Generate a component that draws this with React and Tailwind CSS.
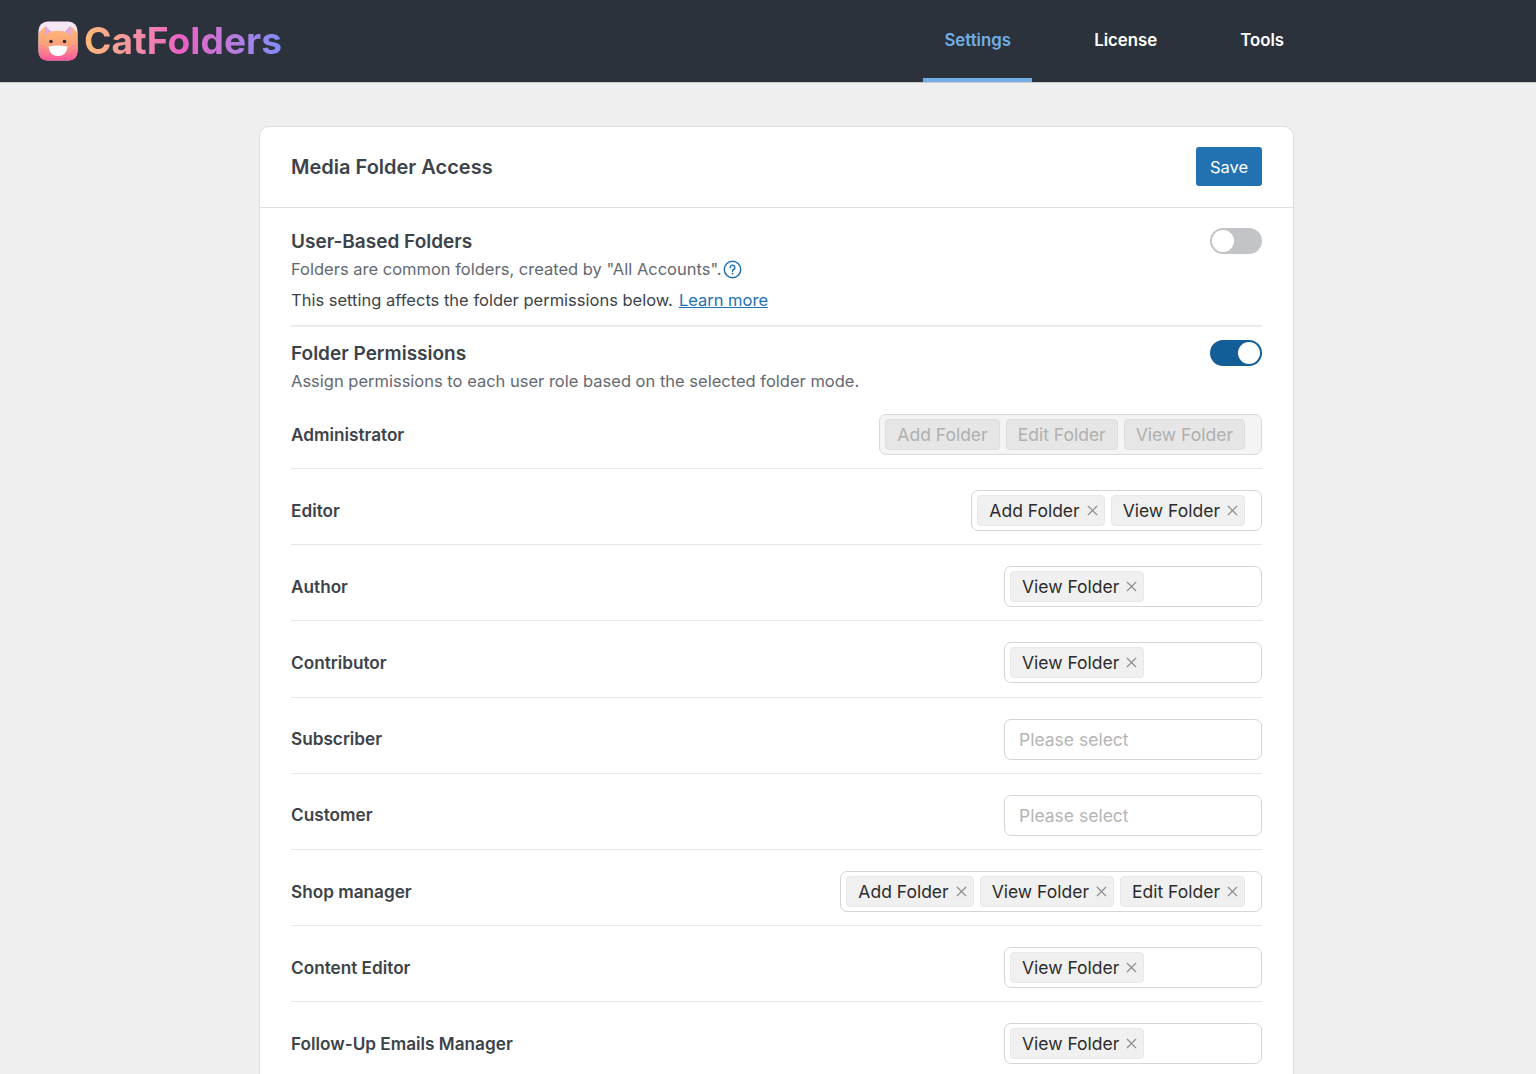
import { X } from "lucide-react";

const roles = [
  { name: "Editor", tags: ["Add Folder", "View Folder"] },
  { name: "Author", tags: ["View Folder"] },
  { name: "Contributor", tags: ["View Folder"] },
  { name: "Subscriber", tags: [] },
  { name: "Customer", tags: [] },
  { name: "Shop manager", tags: ["Add Folder", "View Folder", "Edit Folder"] },
  { name: "Content Editor", tags: ["View Folder"] },
  { name: "Follow-Up Emails Manager", tags: ["View Folder"] },
];

function Logo() {
  return (
    <svg width="40" height="40" viewBox="0 0 40 40" className="shrink-0">
      <defs>
        <linearGradient id="face" x1="0" y1="0" x2="0" y2="1">
          <stop offset="0" stopColor="#fdbb78" />
          <stop offset="0.55" stopColor="#fca07c" />
          <stop offset="1" stopColor="#f9559f" />
        </linearGradient>
      </defs>
      <rect x="0.5" y="0.5" width="39" height="39" rx="9" fill="#f7e6f6" />
      <path
        d="M0.5 12 L0.5 30.5 Q0.5 39.5 9.5 39.5 L30.5 39.5 Q39.5 39.5 39.5 30.5 L39.5 12 Q37 9 32.5 5 L27 10.5 Q20 9 13 10.5 L7.5 5 Q3 9 0.5 12 Z"
        fill="url(#face)"
      />
      <path d="M7.5 5 L13 10.5 L7 14 Z M32.5 5 L27 10.5 L33 14 Z" fill="#dca6e6" />
      <circle cx="13" cy="20.5" r="1.8" fill="#3a2a2a" />
      <circle cx="26.5" cy="20.5" r="1.8" fill="#3a2a2a" />
      <path d="M10.5 25.5 Q20 23.5 29.5 25.5 Q28.5 35 20 35 Q11.5 35 10.5 25.5 Z" fill="#ffffff" />
      <path
        d="M2 24 L6 26 M2 29 L6 30 M38 24 L34 26 M38 29 L34 30"
        stroke="#f472b6"
        strokeWidth="1"
      />
    </svg>
  );
}

function Help() {
  return (
    <svg width="19" height="19" viewBox="0 0 18 18" fill="none" className="inline-block ml-[1px]">
      <circle cx="9" cy="9" r="7.8" stroke="#2271b1" strokeWidth="1.4" />
      <path
        d="M6.8 7.1a2.2 2.2 0 1 1 3.3 1.9c-.7.4-1.1.8-1.1 1.6"
        stroke="#2271b1"
        strokeWidth="1.4"
        strokeLinecap="round"
      />
      <circle cx="9" cy="12.9" r="0.9" fill="#2271b1" />
    </svg>
  );
}

function Toggle({ on }) {
  return (
    <div
      className={`w-[52px] h-[26px] rounded-full border-2 flex items-center ${
        on ? "bg-[#135e96] border-[#135e96] justify-end" : "bg-[#c3c4c7] border-[#c3c4c7] justify-start"
      }`}
    >
      <div className="w-[22px] h-[22px] rounded-full bg-white" />
    </div>
  );
}

function Tag({ label, disabled }) {
  if (disabled) {
    return (
      <span className="h-[31px] px-[11px] flex items-center rounded-[4px] border border-[#dedede] bg-[#e6e6e6] text-[#b0b0b0] text-[17.5px]">
        <span className="pt-[1px]">{label}</span>
      </span>
    );
  }
  return (
    <span className="h-[31px] pl-[11px] pr-[3px] flex items-center gap-[4px] rounded-[4px] border border-[#e8e8e8] bg-[#f0f0f0] text-[#2c2c2c] text-[17.5px]">
      <span className="pt-[1px]">{label}</span>
      <X size={17} strokeWidth={1.6} className="text-[#8a8a8a]" />
    </span>
  );
}

function RoleRow({ role }) {
  return (
    <div className="h-[76.2px] pt-[8px] flex items-center justify-between border-b border-[#e6e7e8]">
      <span className="text-[17.2px] font-semibold text-[#3c434a]">{role.name}</span>
      <div className="min-w-[258px] h-[41px] flex items-center gap-[6px] pl-[5px] pr-[16px] rounded-[7px] border border-[#d5d5d5] bg-white">
        {role.tags.map((t) => (
          <Tag key={t} label={t} />
        ))}
        {role.tags.length === 0 && (
          <span className="pl-[9px] pt-[1px] text-[17.5px] text-[#b5b5b5]">Please select</span>
        )}
      </div>
    </div>
  );
}

export default function App() {
  return (
    <div className="h-[1074px] overflow-hidden bg-[#efefef] font-['Inter',sans-serif]">
      <header className="h-[83px] bg-[#2c323b] flex items-center justify-between border-b border-[#c9c9c9]">
        <div className="flex items-center gap-[6px] pl-[38px]">
          <Logo />
          <span className="text-[37.2px] font-bold leading-none mb-[1px] bg-gradient-to-r from-[#fdba74] via-[#e860c4] to-[#7c8cf8] bg-clip-text text-transparent">
            CatFolders
          </span>
        </div>
        <nav className="flex h-full mr-[252px] text-[16.8px] font-semibold">
          <a className="w-[109px] flex items-center justify-center text-[#72aee6] border-b-[4px] border-[#72aee6] pt-[4px]">
            Settings
          </a>
          <a className="ml-[62px] flex items-center text-white">License</a>
          <a className="ml-[83px] flex items-center text-white">Tools</a>
        </nav>
      </header>

      <main className="w-[1035px] ml-[259px] mt-[43px] bg-white rounded-t-[10px] border border-[#dedede]">
        <div className="h-[81px] px-[31px] flex items-center justify-between border-b border-[#dedede]">
          <h1 className="text-[20px] font-semibold text-[#3c434a]">Media Folder Access</h1>
          <button className="w-[66px] h-[39px] mb-[1px] rounded-[3px] bg-[#2271b1] text-white text-[16.5px] pt-[2px]">
            Save
          </button>
        </div>

        <div className="px-[31px]">
          <section className="h-[119px] pt-[20px] border-b-2 border-[#ebebeb]">
            <div className="flex items-center justify-between h-[26px]">
              <h2 className="text-[19px] pt-[2px] font-semibold text-[#3c434a]">User-Based Folders</h2>
              <Toggle />
            </div>
            <p className="mt-[3px] h-[24px] flex items-center text-[16.5px] text-[#646970]">
              Folders are common folders, created by "All Accounts".
              <Help />
            </p>
            <p className="mt-[7px] h-[24px] flex items-center gap-[6px] text-[16.5px] text-[#3c434a]">
              This setting affects the folder permissions below.
              <a className="text-[#2271b1] underline">Learn more</a>
            </p>
          </section>

          <section className="pt-[13px]">
            <div className="flex items-center justify-between h-[26px]">
              <h2 className="text-[19px] pt-[2px] font-semibold text-[#3c434a]">Folder Permissions</h2>
              <Toggle on />
            </div>
            <p className="mt-[3px] h-[24px] flex items-center text-[16.5px] text-[#646970]">
              Assign permissions to each user role based on the selected folder mode.
            </p>
          </section>

          <div className="h-[76px] pt-[8px] flex items-center justify-between border-b border-[#e6e7e8]">
            <span className="text-[17.2px] font-semibold text-[#3c434a]">Administrator</span>
            <div className="h-[41px] flex items-center gap-[6px] pl-[5px] pr-[16px] rounded-[7px] border border-[#d9d9d9] bg-[#f4f4f4]">
              <Tag disabled label="Add Folder" />
              <Tag disabled label="Edit Folder" />
              <Tag disabled label="View Folder" />
            </div>
          </div>

          {roles.map((role) => (
            <RoleRow key={role.name} role={role} />
          ))}
        </div>
      </main>
    </div>
  );
}
